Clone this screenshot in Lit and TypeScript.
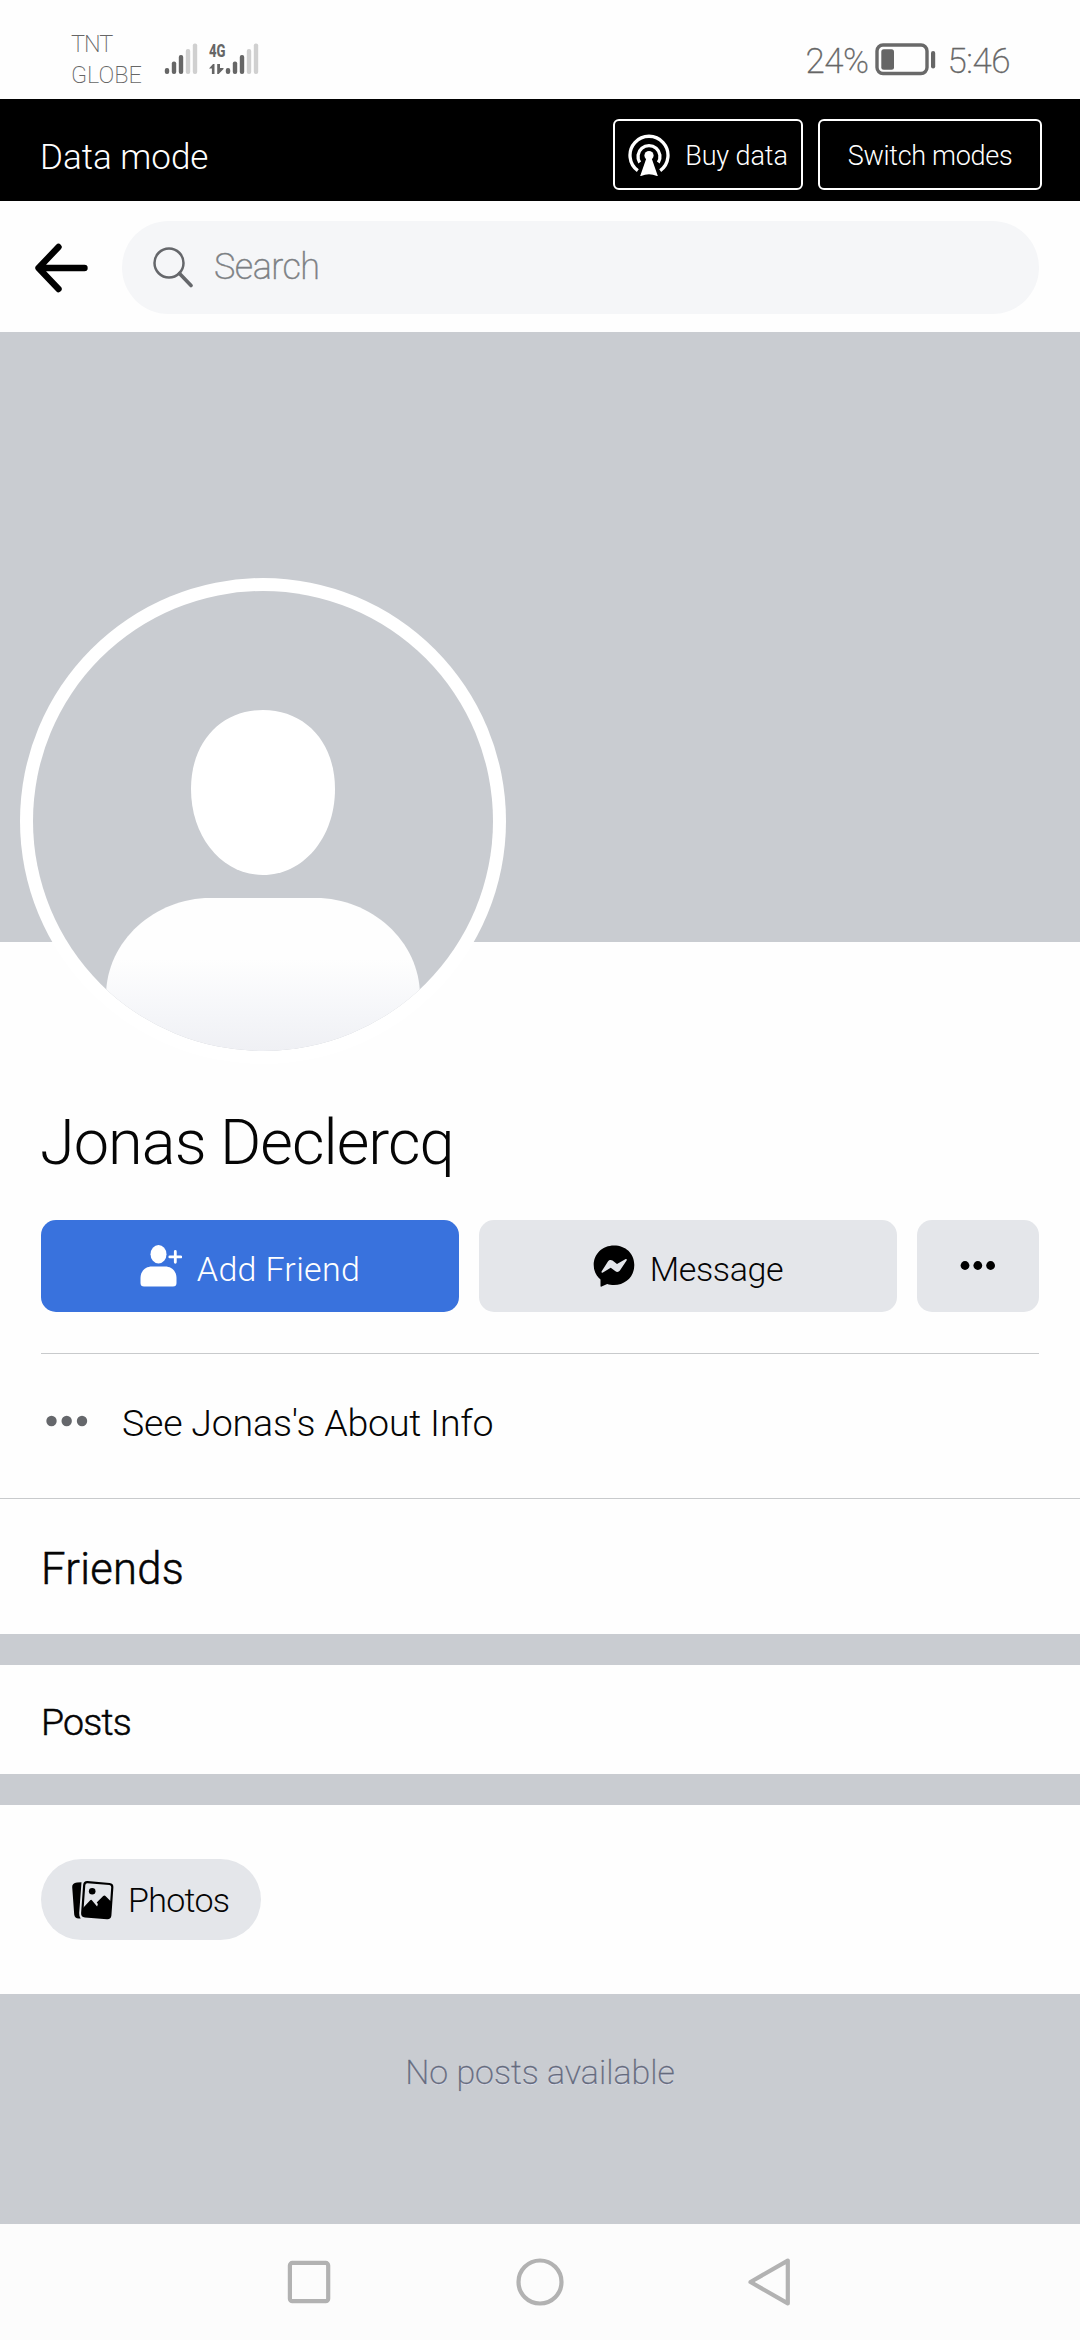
import { LitElement, html, svg, css } from "lit";
import { customElement } from "lit/decorators.js";

const bars = (x: number) => svg`
  <g fill="#666">
    <rect x=${x} y="25" width="4.4" height="6" rx="2"/>
    <rect x=${x + 7} y="18.5" width="4.4" height="12.5" rx="2"/>
    <rect x=${x + 14} y="12" width="4.4" height="19" rx="2"/>
  </g>
  <g fill="#d0d0d0">
    <rect x=${x + 21} y="6" width="4.4" height="25" rx="2"/>
    <rect x=${x + 28} y="0.5" width="4.4" height="30.5" rx="2"/>
  </g>`;

@customElement("status-bar")
export class StatusBar extends LitElement {
  static styles = css`
    :host { display: flex; height: 99px; box-sizing: border-box; padding-left: 71px; padding-right: 70px; color: #666; }
    .carrier { font-size: 23.5px; line-height: 31px; padding-top: 29px; width: 93px; font-weight: 200; }
    .tnt { letter-spacing: -1px; }
    .signal { display: block; margin-top: 33px; width: 96px; height: 43px; }
    .right { margin-left: auto; display: flex; padding-top: 43px; height: 36px; font-size: 35px; line-height: 37px; font-weight: 200; letter-spacing: -0.5px; -webkit-text-stroke: 0.3px #666; }
    .battery { display: block; width: 61px; height: 33px; margin: 0 12px 0 6px; }
  `;
  render() {
    return html`
      <div class="carrier"><div class="tnt">TNT</div><div>GLOBE</div></div>
      <svg class="signal" viewBox="0 -10 96 43">
        ${bars(0.8)}${bars(61.8)}
        <text x="45" y="14.3" font-size="18.5" font-weight="800" fill="#666" textLength="16.5" lengthAdjust="spacingAndGlyphs">4G</text>
        <path d="M50.5 21v10h-2.600v-5.500H45l4-4.500zM53.200 21v10h1.500l4.800-5v-1h-3.500v-4z" fill="#666"/>
      </svg>
      <div class="right">
        <span>24%</span>
        <svg class="battery" viewBox="0 0 61 33">
          <rect x="2" y="2" width="50" height="28.500" rx="6" fill="none" stroke="#696969" stroke-width="3.400"/>
          <rect x="6.300" y="6.300" width="12.700" height="20.500" rx="2.500" fill="#666"/>
          <rect x="56" y="8" width="4.200" height="17.500" rx="2.100" fill="#666"/>
        </svg>
        <span>5:46</span>
      </div>`;
  }
}

@customElement("data-bar")
export class DataBar extends LitElement {
  static styles = css`
    :host { display: flex; align-items: flex-start; gap: 15px; height: 102px; box-sizing: border-box; padding: 20px 38px 0 40px; background: #000; color: #fff; }
    .label { flex: 1; font-size: 35px; line-height: 77px; font-weight: 300; }
    .btn { display: flex; align-items: center; justify-content: center; box-sizing: border-box; height: 71px; border: 2px solid #fff; border-radius: 6px; font-size: 27px; line-height: 30px; font-weight: 300; }
    .buy { width: 190px; gap: 15px; letter-spacing: -0.1px; }
    .switch { width: 224px; letter-spacing: -0.3px; }
    .btn span { padding-top: 3px; }
    svg { display: block; width: 42px; height: 42px; }
  `;
  render() {
    return html`
      <div class="label">Data mode</div>
      <div class="btn buy">
        <svg viewBox="0 0 42 42" fill="none" stroke="#fff">
          <path d="M9.800 36.600A19 19 0 1 1 32.200 36.600" stroke-width="3.300"/>
          <path d="M11.700 28.500A11 11 0 1 1 30.300 28.500" stroke-width="3.300"/>
          <circle cx="21" cy="21.500" r="4.600" fill="#fff" stroke="none"/>
          <path d="M18.800 23h4.400L30 42.500q-9-4.600-18 0z" fill="#fff" stroke="none"/>
        </svg>
        <span>Buy data</span>
      </div>
      <div class="btn switch"><span>Switch modes</span></div>`;
  }
}

@customElement("search-header")
export class SearchHeader extends LitElement {
  static styles = css`
    :host { display: flex; height: 131px; box-sizing: border-box; padding: 20px 41px 18px 34px; gap: 34px; align-items: center; }
    .back { display: block; width: 54px; height: 50px; flex: none; }
    .pill { flex: 1; height: 93px; border-radius: 47px; background: #f5f6f8; display: flex; align-items: center; padding-left: 31px; gap: 20px; font-size: 36px; line-height: 40px; font-weight: 200; color: #7c7f83; letter-spacing: -0.5px; -webkit-text-stroke: 0.4px #7c7f83; }
    .pill span { padding-bottom: 2px; }
    .glass { display: block; width: 41px; height: 41px; }
  `;
  render() {
    return html`
      <svg class="back" viewBox="0 0 54 50" fill="none" stroke="#000" stroke-width="6.400" stroke-linecap="round" stroke-linejoin="round">
        <path d="M24.500 4 4.500 25l20 21M5 25h45.500"/>
      </svg>
      <div class="pill">
        <svg class="glass" viewBox="0 0 41 41" fill="none" stroke="#65676b" stroke-linecap="round">
          <circle cx="16" cy="16" r="14.500" stroke-width="2.500"/>
          <path d="M26.500 26.500 38 38.500" stroke-width="3.600"/>
        </svg>
        <span>Search</span>
      </div>`;
  }
}

@customElement("profile-card")
export class ProfileCard extends LitElement {
  static styles = css`
    :host { display: block; }
    .cover { height: 610px; background: #c9ccd1; }
    .avatar { display: block; width: 486px; height: 486px; margin: -364px 0 0 20px; }
    .name { height: 156px; line-height: 157px; padding-left: 40px; font-size: 63px; font-weight: 300; letter-spacing: -0.95px; color: #050505; }
    .actions { display: grid; grid-template-columns: 418px 418px 122px; gap: 20px; padding: 0 41px; height: 92px; }
    .btn { border-radius: 15px; background: #e4e6ea; display: flex; align-items: center; justify-content: center; gap: 15px; font-size: 34px; line-height: 40px; font-weight: 300; color: #050505; }
    .btn span { padding-top: 5px; }
    .add { background: #3972dd; color: #fff; letter-spacing: 0.3px; }
    .msg { letter-spacing: -0.4px; }
    .msg svg, .add svg { display: block; width: 42px; height: 42px; }
    .more svg { display: block; width: 36px; height: 12px; }
    .about { margin: 41px 41px 0; border-top: 1px solid #c8cacc; height: 145px; box-sizing: border-box; display: flex; align-items: center; gap: 34px; padding: 0 0 6px 4px; font-size: 37.5px; font-weight: 300; letter-spacing: -0.2px; color: #050505; }
    .about svg { display: block; width: 43px; height: 12px; margin-top: -5px; }
    .about-row { border-bottom: 1px solid #c8cacc; }
  `;
  render() {
    return html`
      <div class="cover"></div>
      <svg class="avatar" viewBox="0 0 486 486">
        <defs>
          <clipPath id="round"><circle cx="243" cy="243" r="230"/></clipPath>
          <linearGradient id="fade" x1="0" y1="320" x2="0" y2="473" gradientUnits="userSpaceOnUse">
            <stop offset="0.400" stop-color="#fefefe"/><stop offset="0.750" stop-color="#f5f6f9"/><stop offset="1" stop-color="#eff0f4"/>
          </linearGradient>
        </defs>
        <circle cx="243" cy="243" r="243" fill="#fff"/>
        <g clip-path="url(#round)">
          <rect width="486" height="486" fill="#c9ccd1"/>
          <path d="M243 132c42 0 72 32 72 79 0 49-32 86-72 86s-72-37-72-86c0-47 30-79 72-79z" fill="#fff"/>
          <path d="M190 320h106c54 0 104 42 104 98v80H86v-80c0-56 50-98 104-98z" fill="url(#fade)"/>
        </g>
      </svg>
      <div class="name">Jonas Declercq</div>
      <div class="actions">
        <div class="btn add">
          <svg viewBox="0 0 42 42" fill="#fff">
            <ellipse cx="18.500" cy="9.300" rx="8" ry="9.200"/>
            <path d="M12 21.500h13c7 0 11.500 5 11.500 11.500v5q0 3.500-3.500 3.500H4Q.5 41.500.5 38v-5c0-6.500 4.500-11.500 11.500-11.500z"/>
            <path d="M35.300 6.500v10.800M29.800 11.900h11" stroke="#fff" stroke-width="2.800" stroke-linecap="round"/>
          </svg>
          <span>Add Friend</span>
        </div>
        <div class="btn msg">
          <svg viewBox="0 0 42 42">
            <path d="M21 .500C9.500.500.700 8.800.700 20c0 6 2.600 11 6.800 14.500V41q0 1 1.100.600l5.600-2.600c2 .600 4.400 1 6.800 1 11.500 0 20.300-8.300 20.300-20S32.500.500 21 .500z" fill="#000"/>
            <path d="M8.700 26.300l6.400-10c1-1.600 3-1.800 4.400-.800l4.500 3.600 8.300-4.900c1.200-.6 2 .200 1.300 1.300l-6.700 10c-1 1.500-3 1.900-4.400.8l-4.800-3.500-7.800 4.700c-1.200.6-1.900-.2-1.200-1.200z" fill="#e4e6ea"/>
          </svg>
          <span>Message</span>
        </div>
        <div class="btn more">
          <svg viewBox="0 0 36 12"><circle cx="5" cy="5.500" r="4.400"/><circle cx="17.800" cy="5.500" r="4.400"/><circle cx="30.600" cy="5.500" r="4.400"/></svg>
        </div>
      </div>
      <div class="about-row">
        <div class="about">
          <svg viewBox="0 0 43 12" fill="#65676b"><circle cx="6.500" cy="6" r="5.200"/><circle cx="21.700" cy="6" r="5.200"/><circle cx="37" cy="6" r="5.200"/></svg>
          <span>See Jonas's About Info</span>
        </div>
      </div>`;
  }
}

@customElement("nav-bar")
export class NavBar extends LitElement {
  static styles = css`
    :host { display: flex; height: 116px; background: #fcfcfc; justify-content: center; gap: 183px; align-items: center; }
    svg { display: block; width: 48px; height: 48px; }
  `;
  render() {
    return html`
      <svg viewBox="0 0 48 48" fill="none" stroke="#b2b2b2" stroke-width="4.200"><rect x="4.900" y="4.900" width="38.300" height="38.300" rx="2.500"/></svg>
      <svg viewBox="0 0 48 48" fill="none" stroke="#b2b2b2" stroke-width="4.200"><circle cx="24" cy="24" r="21.500"/></svg>
      <svg viewBox="0 0 48 48" fill="none" stroke="#b2b2b2" stroke-width="4.200" stroke-linejoin="round"><path d="M40.800 2.600v42.800L3.500 24z"/></svg>`;
  }
}

@customElement("app-root")
export class AppRoot extends LitElement {
  static styles = css`
    :host { display: block; width: 1080px; height: 2340px; overflow: hidden; background: #fefefe; font-family: Roboto, "Open Sans", sans-serif; color: #050505; }
    .title { padding-left: 41px; font-weight: 300; -webkit-text-stroke: 0.5px #050505; }
    .friends { height: 135px; line-height: 142px; font-size: 43.5px; letter-spacing: 0.3px; }
    .posts { height: 109px; line-height: 114px; font-size: 37.5px; letter-spacing: -0.8px; }
    .band { height: 31px; background: #c9ccd1; }
    .tabs { height: 189px; box-sizing: border-box; padding: 54px 41px; }
    .chip { display: flex; align-items: center; width: 220px; height: 81px; box-sizing: border-box; padding-left: 30px; gap: 14px; border-radius: 41px; background: #e4e6ea; font-size: 34px; font-weight: 300; letter-spacing: -0.7px; }
    .chip svg { display: block; width: 43px; height: 42px; }
    .empty { height: 230px; background: #c9ccd1; text-align: center; font-size: 34px; line-height: 157px; font-weight: 200; color: #656b7d; text-shadow: 0 1px 0 #dfe0f0; -webkit-text-stroke: 0.3px #656b7d; }
  `;
  render() {
    return html`
      <status-bar></status-bar>
      <data-bar></data-bar>
      <search-header></search-header>
      <profile-card></profile-card>
      <div class="title friends">Friends</div>
      <div class="band"></div>
      <div class="title posts">Posts</div>
      <div class="band"></div>
      <div class="tabs">
        <div class="chip">
          <svg viewBox="0 0 43 42">
            <path d="M10.500 3.200 6 3.500Q1 4 1.200 8l2 27.500q.5 4 4.500 4l2-.1Q8 37.500 8.200 34z"/>
            <path d="M16.500 3.200l22 1.800q3 .3 2.800 3.300l-2 28q-.3 3-3.300 2.800L14 37.300q-3-.3-2.800-3.300l2-27.800q.3-3.200 3.300-3z" fill="none" stroke="#000" stroke-width="2.200"/>
            <circle cx="21.200" cy="12.300" r="3.300"/>
            <path d="M12 29l7.200-7.700q1-.9 1.900.1l5 6 .8-2.500-1.200-1.500 6.500-6.300q1.300-1.200 2.500.1l6 6L39.300 36.300q-.3 3-3.300 2.800L14 37.300q-3-.3-2.800-3.300z"/>
          </svg>
          <span>Photos</span>
        </div>
      </div>
      <div class="empty">No posts available</div>
      <nav-bar></nav-bar>`;
  }
}
